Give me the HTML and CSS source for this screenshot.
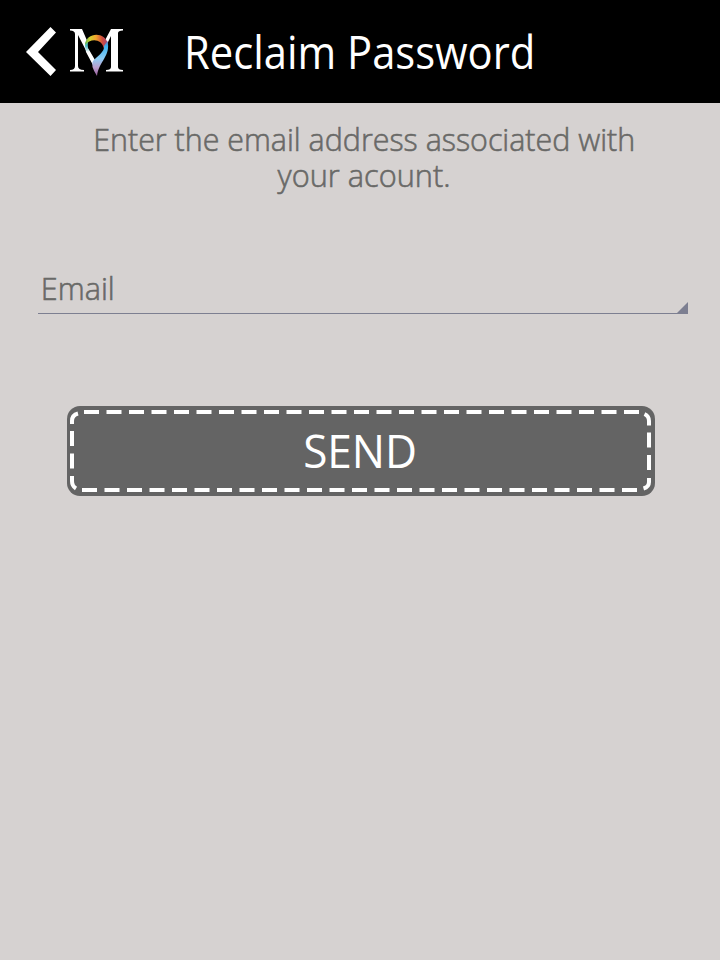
FILE: index.html
```html
<!DOCTYPE html>
<html lang="en">
<head>
<meta charset="utf-8">
<title>Reclaim Password</title>
<link rel="stylesheet" href="styles.css">
</head>
<body>
<header class="bar">
  <svg class="back" viewBox="0 0 30 50" width="30" height="50"><path d="M24.500 0L30 5.500L12 25L30 43L24.500 49L0 25Z" fill="#fff"/></svg>
  <svg class="logo" viewBox="0 0 54 48" width="54" height="48">
    <defs>
      <linearGradient id="arc" x1="0" y1="0" x2="1" y2="0"><stop offset="0" stop-color="#5fb54a"/><stop offset=".22" stop-color="#d2d032"/><stop offset=".48" stop-color="#f2a22d"/><stop offset=".75" stop-color="#cf4d3e"/><stop offset="1" stop-color="#a2467c"/></linearGradient>
      <linearGradient id="tail" x1="0" y1="0" x2="0" y2="1"><stop offset="0" stop-color="#5d76b8"/><stop offset=".15" stop-color="#3db4ee"/><stop offset=".5" stop-color="#8ccdf5"/><stop offset=".75" stop-color="#b9a0cf"/><stop offset="1" stop-color="#975c9b"/></linearGradient>
      <linearGradient id="left" x1="0" y1="0" x2="0" y2="1"><stop offset="0" stop-color="#55b654"/><stop offset=".3" stop-color="#49b9c6"/><stop offset=".5" stop-color="#fff"/></linearGradient>
    </defs>
    <path d="M0 0H12L25 30L41 0H53V1.500Q48 1.500 48 4V38Q48 41 53 41V42.500H36V41Q41 41 41 38V7L26 37H24L8 6V37Q8 41 14 41V42.500H0V41Q5 41 5 37V5Q5 1.500 0 1.500Z" fill="#fff"/>
    <path d="M17 18Q16 8 25 8Q36 8 36 16Q35 23 25 33Z" fill="#000"/>
    <path d="M15 17Q15 11 20 8Q17 14 18 19L25 31L24 38L16 23Z" fill="url(#left)"/>
    <path d="M15 16C16 3 35 2 38 15L34 20C32 9 20 9 15 16Z" fill="url(#arc)"/>
    <path d="M37.500 12C41 27 29 32 27 47Q20 36 23 32C27 27 35 23 34 17Z" fill="url(#tail)"/>
  </svg>
  <h1 class="title"><span class="title-text">Reclaim Password</span></h1>
</header>
<main>
  <p class="intro"><span class="line line-one">Enter the email address associated with</span><span class="line line-two">your acount.</span></p>
  <div class="field"><span class="label">Email</span>
    <svg class="corner" width="11" height="11" viewBox="0 0 12 12"><path d="M12 0V12H0Z" fill="#7d7f91"/></svg>
  </div>
  <button class="send">
    <svg class="stitch" width="588" height="90" viewBox="67 406 588 90" fill="none" stroke="#fff" stroke-width="4">
      <path d="M84 412H640M82 490H638" stroke-dasharray="15 7.500"/>
      <path d="M72 431V469M649 432.500V471" stroke-dasharray="15 7.500"/>
      <path d="M72 424V421Q72 415 78 413.500M644.500 414Q649 416 649 421V425.500M72 476V481Q72 486 76 488.500M649 478V482Q649 487 643.500 488.500"/>
    </svg>
    <span class="send-text">SEND</span>
  </button>
</main>
</body>
</html>
```

FILE: styles.css
```css
* { box-sizing: border-box; }
body { margin: 0; min-height: 960px; background: #d6d2d1; color: #696967; font-family: "Open Sans", sans-serif; font-weight: 300; }
.bar { display: flex; height: 103px; padding: 27px 0 0 26px; background: #000; color: #fff; }
.back { flex: none; }
.logo { flex: none; margin: 2px 0 0 14px; }
.title { margin: -6px 0 0 60px; font-size: 45px; font-weight: 400; line-height: 61px; white-space: nowrap; }
.title-text { display: inline-block; transform: scaleX(.928); transform-origin: left; }
.intro { display: flex; flex-direction: column; align-items: center; margin: 18px 0 0 8px; font-size: 32px; line-height: 36px; }
.line { white-space: nowrap; transform: scaleX(.95); -webkit-text-stroke: .6px currentColor; }
.line-two { transform: scaleX(.96); }
.field { display: flex; justify-content: space-between; align-items: flex-end; width: 650px; height: 52px; margin: 69px 0 0 38px; border-bottom: 1px solid #7d7f91; font-size: 32px; line-height: 50px; }
.label { padding-left: 3px; transform: scaleX(.955); transform-origin: left; -webkit-text-stroke: .6px currentColor; }
.send { display: grid; place-items: center; width: 588px; height: 90px; margin: 92px 0 0 67px; padding: 0; border: 0; border-radius: 13px; background: #646464; color: #fff; font: 400 45px/90px "Open Sans", sans-serif; }
.stitch, .send-text { grid-area: 1 / 1; }
.send-text { transform: translateX(-1px) scaleX(.98); }
```
